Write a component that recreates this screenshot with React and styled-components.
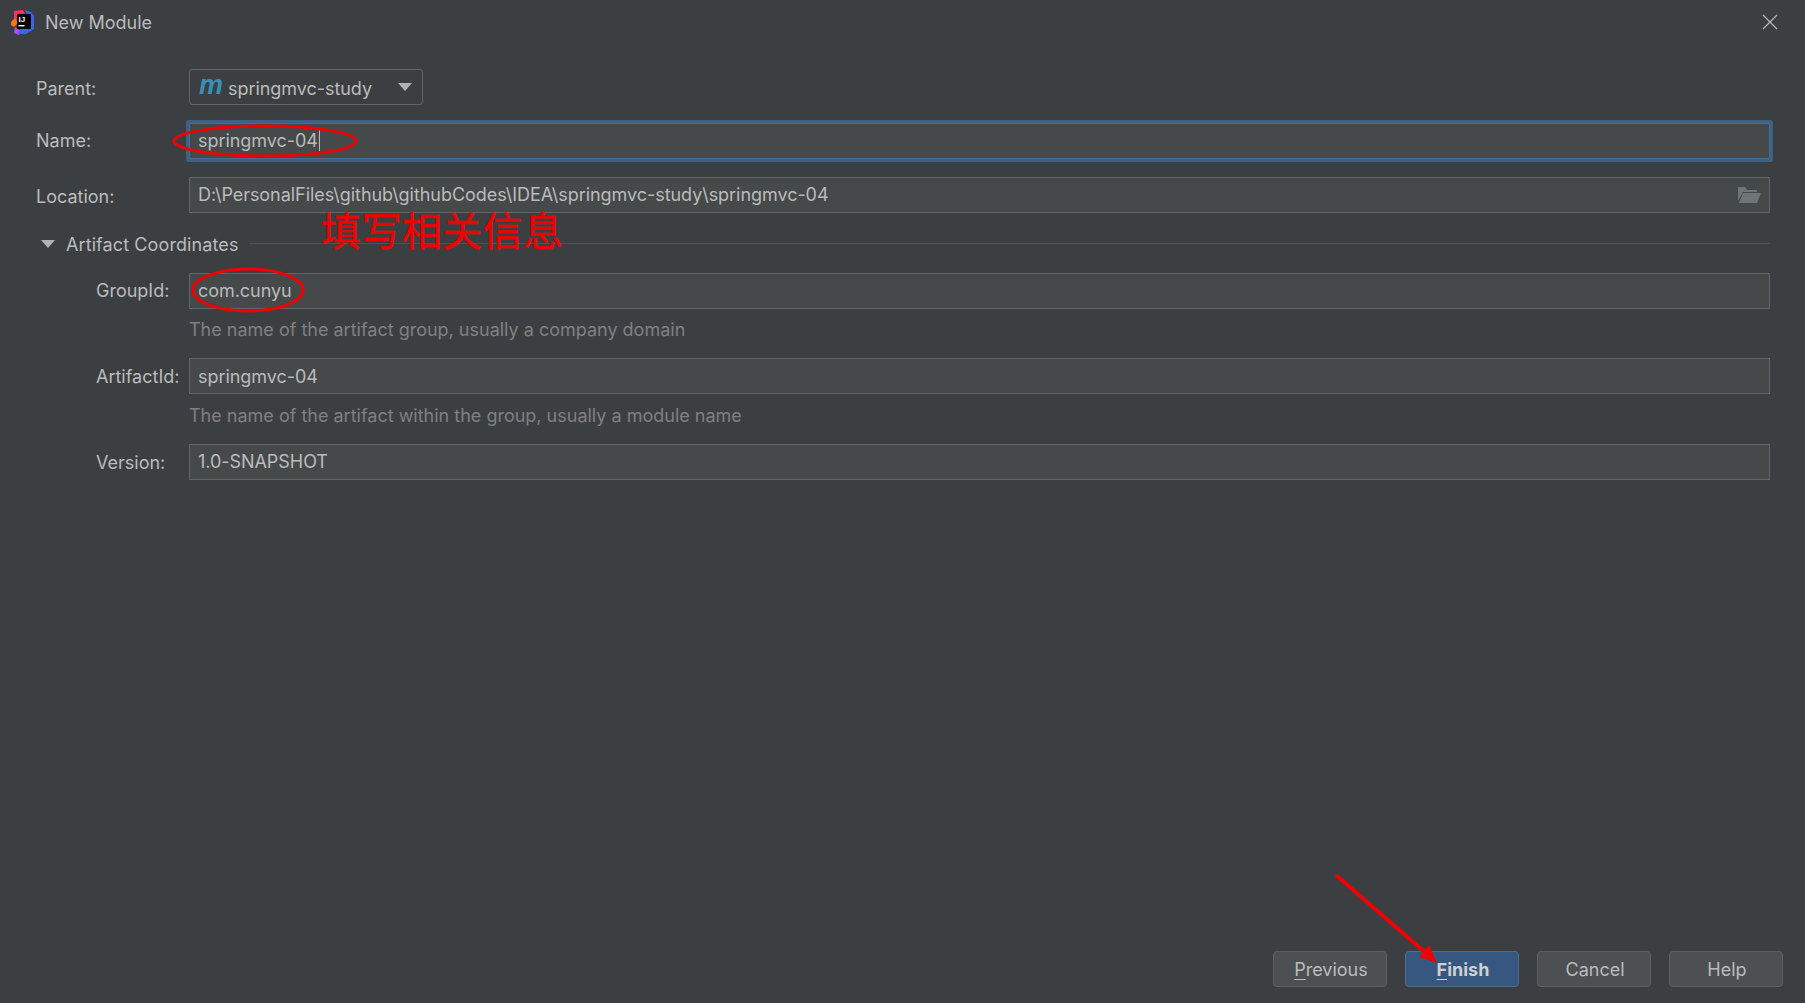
import styled, { createGlobalStyle } from "styled-components";

const GlobalStyle = createGlobalStyle`
    html, body {
        margin: 0;
        padding: 0;
        background-color: #3c3f41;
    }
`;

const Dialog = styled.div`
    position: relative;
    display: flex;
    flex-direction: column;
    width: 1805px;
    height: 1003px;
    overflow: hidden;
    background-color: #3c3f41;
    color: #bbbbbb;
    font-family: Inter, "Liberation Sans", sans-serif;
    font-size: 18px;
`;

const TitleBar = styled.div`
    display: flex;
    align-items: center;
    justify-content: space-between;
    height: 44px;
    padding: 0 27px 0 11px;
`;

const TitleLeft = styled.div`
    display: flex;
    align-items: center;
    gap: 10px;
`;

const Form = styled.div`
    display: flex;
    flex-direction: column;
    padding: 25px 35px 0 36px;
`;

const Row = styled.div`
    display: flex;
    align-items: center;
    height: 36px;
    margin-bottom: ${({ $gap }) => $gap ?? 18}px;
    padding-left: ${({ $indent }) => ($indent ? 60 : 0)}px;
`;

const Label = styled.div`
    flex: none;
    width: ${({ $indent }) => ($indent ? 93 : 153)}px;
    position: relative;
    top: ${({ $shift }) => $shift ?? 0}px;
`;

const Field = styled.div`
    flex: 1;
    display: flex;
    align-items: center;
    justify-content: space-between;
    height: 36px;
    box-sizing: border-box;
    padding: 0 7px ${({ $low }) => ($low ? 0 : 1)}px 8px;
    letter-spacing: -0.05px;
    background-color: #45494a;
    border: 1px solid ${({ $focused }) => ($focused ? "#466d94" : "#646464")};
    box-shadow: ${({ $focused }) => ($focused ? "0 0 0 3px #3d6185" : "none")};
    border-radius: ${({ $focused }) => ($focused ? 1 : 0)}px;
`;

const Caret = styled.span`
    display: inline-block;
    width: 1px;
    height: 21px;
    margin-left: 1px;
    vertical-align: -4px;
    background-color: #bbbbbb;
`;

const Combo = styled.div`
    display: flex;
    align-items: center;
    width: 234px;
    height: 36px;
    box-sizing: border-box;
    padding: 0 9px;
    border: 1px solid #646464;
    border-radius: 3px;
`;

const MavenMark = styled.span`
    width: 29px;
    font-family: "Liberation Sans", sans-serif;
    font-size: 27px;
    font-weight: 700;
    font-style: italic;
    line-height: 30px;
    color: #3a8fb7;
    position: relative;
    top: -2px;
`;

const ComboText = styled.span`
    flex: 1;
    position: relative;
    top: 1px;
    letter-spacing: -0.05px;
`;

const ComboArrow = styled.span`
    width: 0;
    height: 0;
    margin-right: 1px;
    border-left: 7px solid transparent;
    border-right: 7px solid transparent;
    border-top: 8px solid #afb1b3;
`;

const SectionHeader = styled.div`
    display: flex;
    align-items: center;
    height: 24px;
    margin-bottom: 18px;
`;

const CollapseArrow = styled.span`
    width: 0;
    height: 0;
    margin: 1px 11px 0 5px;
    border-left: 7px solid transparent;
    border-right: 7px solid transparent;
    border-top: 8px solid #afb1b3;
`;

const SectionTitle = styled.span`
    position: relative;
    top: 1px;
    letter-spacing: 0.1px;
`;

const SectionLine = styled.div`
    flex: 1;
    height: 1px;
    margin-left: 10px;
    background-color: #515151;
`;

const Hint = styled.div`
    height: 24px;
    line-height: 24px;
    margin: ${({ $top }) => $top}px 0 16px 153px;
    color: #808080;
`;

const Footer = styled.div`
    display: flex;
    justify-content: flex-end;
    gap: 18px;
    margin-top: auto;
    padding: 0 22px 16px 0;
`;

const Button = styled.div`
    display: flex;
    align-items: center;
    justify-content: center;
    width: 114px;
    height: 36px;
    box-sizing: border-box;
    padding: 1px 0 0 2px;
    border-radius: 4px;
    border: 1px solid ${({ $primary }) => ($primary ? "#4c708c" : "#5e6060")};
    background-color: ${({ $primary }) => ($primary ? "#365880" : "#4c5052")};
    font-weight: ${({ $primary }) => ($primary ? 700 : 400)};
    color: ${({ $primary }) => ($primary ? "#d0d0d0" : "#bbbbbb")};
`;

const Mnemonic = styled.span`
    text-decoration: underline;
    text-underline-offset: 3px;
`;

// red marks somebody drew on the screenshot, they lie over the form
const MarkupLayer = styled.svg`
    position: absolute;
    left: 0;
    top: 0;
    pointer-events: none;
`;

const MarkupText = styled.div`
    position: absolute;
    left: 321px;
    top: 209px;
    font-family: "Noto Sans CJK SC", sans-serif;
    font-size: 40px;
    letter-spacing: 0.4px;
    line-height: 40px;
    -webkit-text-stroke: 0.4px #f00000;
    color: #f00000;
    white-space: nowrap;
`;

const ProductIcon = () => (
    <svg width="24" height="26" viewBox="0 0 24 26">
        <path d="M3 2 L12 1 L14 5 L6 12 L3 9 Z" fill="#fe315d" />
        <path d="M0 13 L4 9 L7 14 L3 18 L0 16 Z" fill="#f97a12" />
        <path d="M4 18 L10 22 L8 26 L3 24 Z" fill="#b74af7" />
        <path d="M14 1 L20 3 L23 7 L23 20 L15 25 L7 25 L10 18 L18 10 Z" fill="#3c63e8" />
        <rect x="6" y="5" width="14" height="15" fill="#000000" />
        <text x="7.5" y="13" fontFamily="Liberation Sans, sans-serif" fontSize="8" fontWeight="700" fill="#ffffff">IJ</text>
        <rect x="7.5" y="16" width="6" height="1.4" fill="#ffffff" />
    </svg>
);

const CloseIcon = () => (
    <svg width="16" height="16" viewBox="0 0 16 16">
        <path d="M1 1 L15 15 M15 1 L1 15" stroke="#b4b6b8" strokeWidth="1.3" fill="none" />
    </svg>
);

const FolderIcon = () => (
    <svg width="24" height="18" viewBox="0 0 24 18">
        <path d="M0 1 H7 L9 4 H19 V6 H5 L0 15 Z" fill="#6e7678" />
        <path d="M5 7 H23 L19 17 H1 Z" fill="#6e7678" />
    </svg>
);

const Markup = () => (
    <MarkupLayer width="1805" height="1003" viewBox="0 0 1805 1003">
        <ellipse cx="265" cy="141" rx="91" ry="15" fill="none" stroke="#f00000" strokeWidth="3" />
        <ellipse cx="248" cy="290" rx="55" ry="21" fill="none" stroke="#f00000" strokeWidth="3" />
        <path d="M1336 875 L1428 955" stroke="#f00000" strokeWidth="4" fill="none" />
        <path d="M1437 963 L1419 957 L1429 945 Z" fill="#f00000" />
    </MarkupLayer>
);

const App = () => {
    return (
        <Dialog>
            <GlobalStyle />
            <TitleBar>
                <TitleLeft>
                    <ProductIcon />
                    New Module
                </TitleLeft>
                <CloseIcon />
            </TitleBar>
            <Form>
                <Row>
                    <Label $shift={1}>Parent:</Label>
                    <Combo>
                        <MavenMark>m</MavenMark>
                        <ComboText>springmvc-study</ComboText>
                        <ComboArrow />
                    </Combo>
                </Row>
                <Row>
                    <Label $shift={-1}>Name:</Label>
                    <Field $focused>
                        <span>springmvc-04<Caret /></span>
                    </Field>
                </Row>
                <Row>
                    <Label $shift={1}>Location:</Label>
                    <Field>
                        D:\PersonalFiles\github\githubCodes\IDEA\springmvc-study\springmvc-04
                        <FolderIcon />
                    </Field>
                </Row>
                <SectionHeader>
                    <CollapseArrow />
                    <SectionTitle>Artifact Coordinates</SectionTitle>
                    <SectionLine />
                </SectionHeader>
                <Row $indent $gap={0}>
                    <Label $indent $shift={-1}>GroupId:</Label>
                    <Field>com.cunyu</Field>
                </Row>
                <Hint $top={9}>The name of the artifact group, usually a company domain</Hint>
                <Row $indent $gap={0}>
                    <Label $indent>ArtifactId:</Label>
                    <Field $low>springmvc-04</Field>
                </Row>
                <Hint $top={10}>The name of the artifact within the group, usually a module name</Hint>
                <Row $indent $gap={0}>
                    <Label $indent>Version:</Label>
                    <Field>1.0-SNAPSHOT</Field>
                </Row>
            </Form>
            <Footer>
                <Button><span><Mnemonic>P</Mnemonic>revious</span></Button>
                <Button $primary><span><Mnemonic>F</Mnemonic>inish</span></Button>
                <Button>Cancel</Button>
                <Button>Help</Button>
            </Footer>
            <Markup />
            <MarkupText>填写相关信息</MarkupText>
        </Dialog>
    );
};

export default App;
